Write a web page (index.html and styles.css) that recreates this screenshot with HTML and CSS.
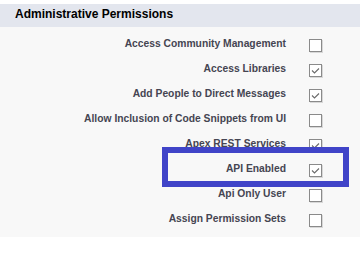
FILE: index.html
```html
<!DOCTYPE html>
<html>
<head>
<meta charset="utf-8">
<link rel="stylesheet" href="styles.css">
</head>
<body>
<div class="section">
  <div class="header">Administrative Permissions</div>
  <div class="list">
    <div class="row"><span class="label">Access Community Management</span><span class="cb"></span></div>
    <div class="row"><span class="label">Access Libraries</span><span class="cb checked"><svg viewBox="0 0 13 13"><polyline points="3,6.5 5.5,9 10,4.5"/></svg></span></div>
    <div class="row"><span class="label">Add People to Direct Messages</span><span class="cb checked"><svg viewBox="0 0 13 13"><polyline points="3,6.5 5.5,9 10,4.5"/></svg></span></div>
    <div class="row"><span class="label">Allow Inclusion of Code Snippets from UI</span><span class="cb"></span></div>
    <div class="row"><span class="label">Apex REST Services</span><span class="cb checked"><svg viewBox="0 0 13 13"><polyline points="3,6.5 5.5,9 10,4.5"/></svg></span></div>
    <div class="row"><span class="label">API Enabled</span><span class="cb checked"><svg viewBox="0 0 13 13"><polyline points="3,6.5 5.5,9 10,4.5"/></svg></span></div>
    <div class="row"><span class="label">Api Only User</span><span class="cb"></span></div>
    <div class="row"><span class="label">Assign Permission Sets</span><span class="cb"></span></div>
  </div>
  <div class="highlight"></div>
</div>
</body>
</html>
```
FILE: styles.css
```css
html, body {
  margin: 0;
  padding: 0;
  background: #ffffff;
}
body {
  width: 360px;
  height: 269px;
  overflow: hidden;
  font-family: "Liberation Sans", Arial, sans-serif;
}
.section {
  position: relative;
  margin-top: 4px;
}
.header {
  height: 23px;
  box-sizing: border-box;
  background: #e3e6ee;
  padding-left: 15px;
  line-height: 20px;
  font-size: 12px;
  font-weight: bold;
  color: #000;
}
.list {
  background: #f8f8f8;
  padding-top: 10px;
  height: 210px;
  box-sizing: border-box;
}
.row {
  display: flex;
  align-items: flex-start;
  height: 25px;
}
.label {
  width: 286px;
  text-align: right;
  font-size: 10.3px;
  line-height: 13px;
  font-weight: bold;
  color: #454552;
  white-space: nowrap;
}
.cb {
  margin-left: 23px;
  margin-top: 2px;
  width: 13px;
  height: 13px;
  box-sizing: border-box;
  border: 1px solid #8a8a8a;
  background: #ffffff;
  box-shadow: 1px 1px 0 #d8d8d8;
  position: relative;
}
.cb svg {
  position: absolute;
  left: -1px;
  top: -1px;
  width: 13px;
  height: 13px;
}
.cb svg polyline {
  fill: none;
  stroke: #6b6b6b;
  stroke-width: 1.1;
}
.highlight {
  position: absolute;
  left: 162px;
  top: 143px;
  width: 187px;
  height: 40px;
  box-sizing: border-box;
  border: 6px solid #4044c8;
}
```
